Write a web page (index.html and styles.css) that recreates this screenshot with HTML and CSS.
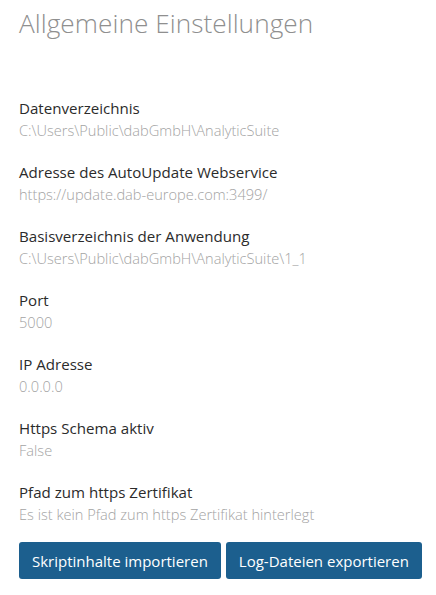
FILE: index.html
```html
<!DOCTYPE html>
<html lang="de">
<head>
<meta charset="utf-8">
<link rel="stylesheet" href="styles.css">
</head>
<body>
<main class="page">
  <h1 class="title">Allgemeine Einstellungen</h1>
  <dl class="settings">
    <div class="item"><dt>Datenverzeichnis</dt><dd>C:\Users\Public\dabGmbH\AnalyticSuite</dd></div>
    <div class="item"><dt>Adresse des AutoUpdate Webservice</dt><dd>https://update.dab-europe.com:3499/</dd></div>
    <div class="item"><dt>Basisverzeichnis der Anwendung</dt><dd>C:\Users\Public\dabGmbH\AnalyticSuite\1_1</dd></div>
    <div class="item"><dt>Port</dt><dd>5000</dd></div>
    <div class="item"><dt>IP Adresse</dt><dd>0.0.0.0</dd></div>
    <div class="item"><dt>Https Schema aktiv</dt><dd>False</dd></div>
    <div class="item"><dt>Pfad zum https Zertifikat</dt><dd>Es ist kein Pfad zum https Zertifikat hinterlegt</dd></div>
  </dl>
  <div class="actions">
    <button class="btn" type="button">Skriptinhalte importieren</button>
    <button class="btn" type="button">Log-Dateien exportieren</button>
  </div>
</main>
</body>
</html>
```
FILE: styles.css
```css
* { box-sizing: border-box; }
html, body { margin: 0; padding: 0; background: #fff; }
body { font-family: "Open Sans", "Noto Sans", sans-serif; }
.page { padding: 3px 0 0 19px; }
.title {
  margin: 0;
  font-size: 26.2px;
  font-weight: 300;
  color: #8f8f8f;
  line-height: 40px;
  letter-spacing: 0.05px;
}
.settings { margin: 54px 0 0 0; display: flex; flex-direction: column; gap: 20px; }
.item { display: flex; flex-direction: column; }
.item dt { font-size: 15.1px; color: #2b2b2b; line-height: 22px; }
.item dd { margin: 0; font-size: 14.6px; font-weight: 300; color: #a3a3a3; line-height: 22px; }
.actions { display: flex; gap: 5px; margin-top: 17px; }
.btn {
  flex: none;
  white-space: nowrap;
  font-family: inherit;
  font-size: 15px;
  color: #fff;
  background: #1c5f8e;
  border: 0;
  border-radius: 3px;
  height: 37px;
  padding: 0 13px;
}
```
